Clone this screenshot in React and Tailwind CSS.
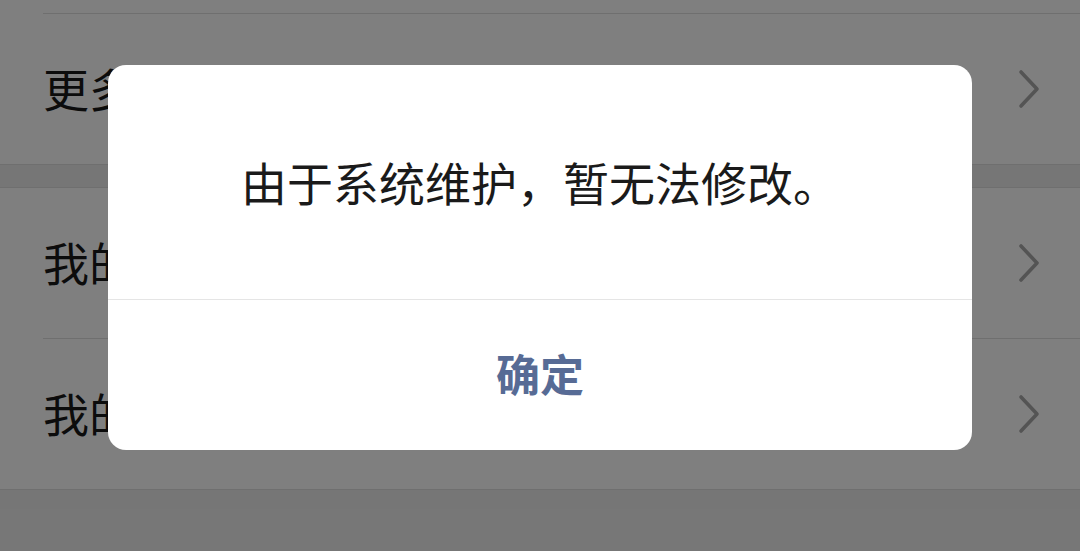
import React from 'react';

const font = { fontFamily: '"Noto Sans CJK SC", "Noto Sans", sans-serif' };

function Chevron() {
    return (
        <svg width="22" height="40" viewBox="0 0 22 40" className="shrink-0">
            <path d="M3 3 L19 20 L3 37" fill="none" stroke="#a8a8a8" strokeWidth="3.6" strokeLinecap="round" strokeLinejoin="round" />
        </svg>
    );
}

function Row({ label, last }) {
    return (
        <div className="bg-white pl-[43px]">
            <div className={`flex items-center justify-between pr-[40px] ${last ? "h-[150px]" : "h-[151px] border-b border-[#dedede]"}`}>
                <span className="text-[46px] text-[#191919] leading-none pb-[4px]">{label}</span>
                <Chevron />
            </div>
        </div>
    );
}

export default function App() {
    return (
        <div className="relative w-[1080px] h-[551px] overflow-hidden bg-[#ededed]" style={font}>
            <div className="bg-white pl-[43px]">
                <div className="h-[14px] border-b border-[#dedede]"></div>
            </div>
            <div className="border-b border-[#dedede]">
                <Row label="更多信息" last />
            </div>
            <div className="h-[22px]"></div>
            <div className="border-y border-[#dedede]">
                <Row label="我的地址" />
                <Row label="我的发票抬头" last />
            </div>

            <div className="absolute inset-0 bg-black/50 flex justify-center items-start pt-[65px]">
                <div className="w-[864px] bg-white rounded-[18px] overflow-hidden">
                    <div className="h-[234px] flex items-center justify-center pb-[2px]">
                        <p className="text-[46px] text-[#1a1a1a] leading-none">由于系统维护，暂无法修改。</p>
                    </div>
                    <div className="h-[151px] border-t border-[#e5e5e5] flex items-center justify-center pb-[4px]">
                        <span className="text-[44px] font-bold text-[#576b95] leading-none">确定</span>
                    </div>
                </div>
            </div>
        </div>
    );
}
